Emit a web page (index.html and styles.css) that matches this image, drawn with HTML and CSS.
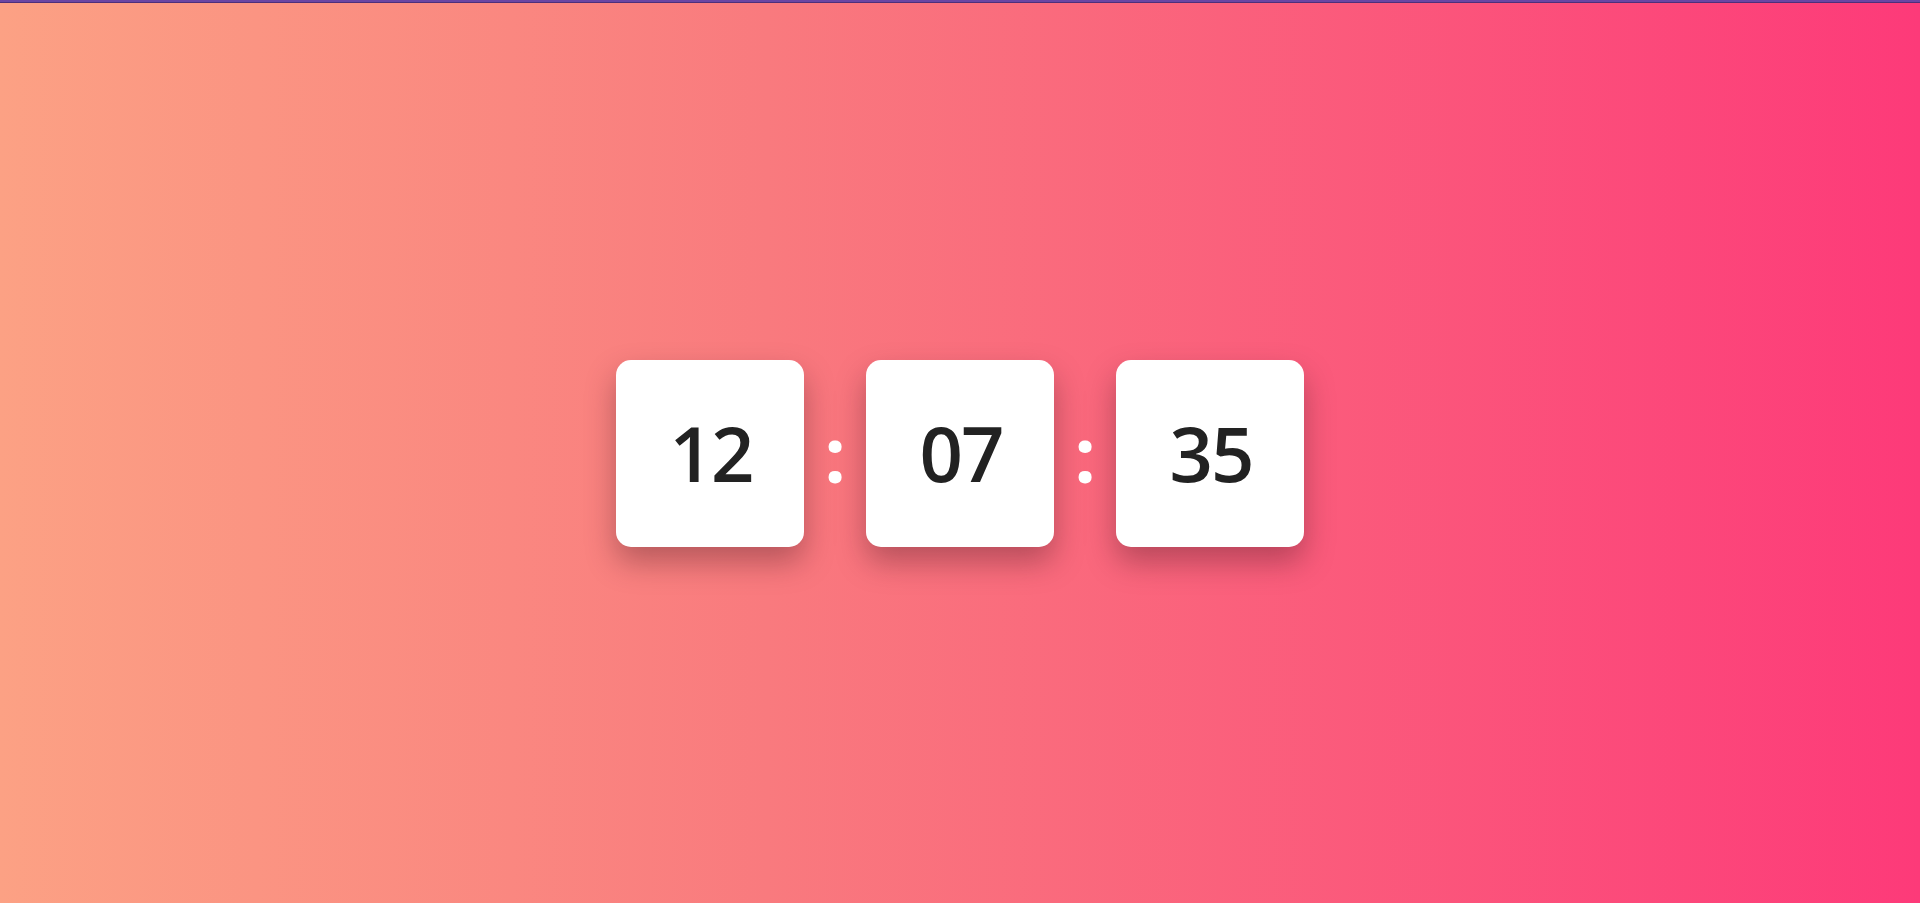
FILE: index.html
```html
<!DOCTYPE html>
<html lang="en">
<head>
<meta charset="utf-8">
<title>Clock</title>
<link rel="stylesheet" href="styles.css">
</head>
<body>
  <main class="page">
    <div class="clock">
      <div class="card"><span class="num">12</span></div>
      <span class="colon">:</span>
      <div class="card"><span class="num">07</span></div>
      <span class="colon">:</span>
      <div class="card"><span class="num">35</span></div>
    </div>
  </main>
</body>
</html>
```

FILE: styles.css
```css
* { box-sizing: border-box; }
html, body { margin: 0; padding: 0; }
body {
  height: 903px;
  border-top: 2px solid #6b46a3;
  background: linear-gradient(to right, #fca184 0%, #f97a7e 40%, #fd3a79 100%);
  font-family: "Open Sans", "Liberation Sans", sans-serif;
  overflow: hidden;
}
.page {
  height: 901px;
  border-top: 1px solid #4e2f7a;
  display: flex;
  align-items: center;
  justify-content: center;
}
.clock {
  display: flex;
  align-items: center;
}
.card {
  width: 188px;
  height: 187px;
  background: #fff;
  border-radius: 15px;
  box-shadow: 0 15px 30px rgba(60, 20, 30, 0.35);
  display: flex;
  align-items: center;
  justify-content: center;
}
.num {
  font-size: 76px;
  font-weight: 600;
  color: #222;
  line-height: 1;
  letter-spacing: -2px;
  padding-left: 2px;
}
.colon {
  font-size: 76px;
  line-height: 1;
  color: #fff;
  font-weight: 700;
  width: 62px;
  text-align: center;
  position: relative;
  top: 1px;
}
```
